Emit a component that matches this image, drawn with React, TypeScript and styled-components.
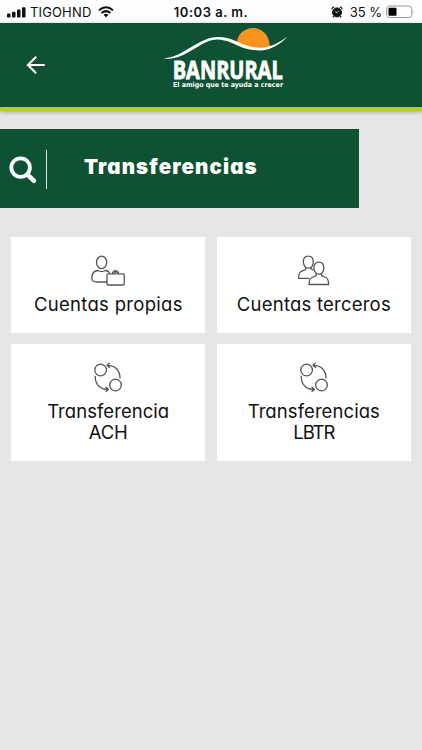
import React from "react";
import styled, { createGlobalStyle } from "styled-components";

const GlobalStyle = createGlobalStyle`
  * { box-sizing: border-box; }
  body { margin: 0; background: #e5e5e5; font-family: Inter, "Noto Sans", sans-serif; }
`;

const Screen = styled.main`
  display: flex;
  flex-direction: column;
  width: 422px;
  height: 750px;
  overflow: hidden;
  background: #e5e5e5;
`;

const StatusBar = styled.div`
  display: grid;
  grid-template-columns: 1fr auto 1fr;
  align-items: center;
  flex: none;
  height: 23px;
  padding: 1px 7px 0 7px;
  background: #fdfdfd;
  color: #111;
  font-size: 13px;
  line-height: 22px;
  white-space: nowrap;
`;

const StatusGroup = styled.div<{ $end?: boolean }>`
  display: flex;
  align-items: center;
  justify-content: ${(p) => (p.$end ? "flex-end" : "flex-start")};
`;

const Carrier = styled.span`
  margin: 0 6.5px 0 4px;
  letter-spacing: 0.15px;
`;

const Clock = styled.span`
  font-weight: 600;
  letter-spacing: 0.5px;
`;

const Percent = styled.span`
  margin: 0 4px 0 7px;
  letter-spacing: 0;
`;

const Header = styled.header`
  display: grid;
  grid-template-columns: 164px 126px 1fr;
  flex: none;
  height: 88px;
  background: #0f5233;
  border-bottom: 4px solid #b9cb34;
  box-shadow: 0 1px 4px rgba(0, 0, 0, 0.3);
`;

const BackButton = styled.button`
  display: flex;
  align-items: flex-start;
  padding: 32px 0 0 26px;
  border: 0;
  background: none;
`;

const Banner = styled.section`
  display: flex;
  flex: none;
  width: 359px;
  height: 79px;
  margin-top: 18.4px;
  padding: 20.6px 0 0 9px;
  background: #0f5233;
`;

const SearchBox = styled.div`
  width: 38px;
  height: 39px;
  padding-top: 6px;
  border-right: 1px solid #dfe9e4;
`;

const Title = styled.h1`
  margin: 3px 0 0 37px;
  color: #fff;
  font-size: 20.5px;
  font-weight: 900;
  line-height: 28px;
  letter-spacing: 1.1px;
  font-feature-settings: "cv11";
`;

const CardGrid = styled.div`
  display: grid;
  grid-template-columns: 194px 194px;
  grid-template-rows: 96px 117px;
  gap: 11px 11.6px;
  padding: 28.6px 0 0 11.2px;
`;

const Card = styled.button`
  display: flex;
  flex-direction: column;
  align-items: center;
  padding: 17px 0 0;
  border: 0;
  background: #fff;
  color: #111;
  font-family: inherit;
`;

const Line = styled.span<{ $spacing: number }>`
  font-size: 18.5px;
  line-height: 21.5px;
  letter-spacing: ${(p) => p.$spacing}px;
  margin-right: -${(p) => Math.max(p.$spacing, 0)}px;
  white-space: nowrap;
  font-feature-settings: "cv11";
`;

const CardIcon = styled.svg`
  flex: none;
  width: 36px;
  height: 34px;
  margin-bottom: 6px;
  fill: none;
  stroke: #555;
  stroke-width: 1.3;
  stroke-linecap: round;
  stroke-linejoin: round;
`;

const Signal = () => (
  <svg width="19" height="11" viewBox="0 0 19 11" fill="#111">
    <rect x="0" y="6.5" width="3.5" height="4" rx="0.9" />
    <rect x="5" y="4.7" width="3.5" height="5.8" rx="0.9" />
    <rect x="10" y="2.5" width="3.5" height="8" rx="0.9" />
    <rect x="15" y="0.3" width="3.5" height="10.2" rx="0.9" />
  </svg>
);

const Wifi = () => (
  <svg width="16" height="12" viewBox="0 0 16 12" fill="none" stroke="#111" strokeWidth="2">
    <path d="M1 4.2Q8-1.8 15 4.2M3.5 7Q8 3.2 12.5 7" />
    <path d="M5.6 8.7Q8 6.9 10.4 8.7L8 11.4Z" fill="#111" stroke="none" />
  </svg>
);

const Alarm = () => (
  <svg width="12" height="12" viewBox="0 0 12 12" fill="none" stroke="#111">
    <circle cx="6" cy="6.4" r="4.5" fill="#111" />
    <path d="M.8 3.2Q1 1.2 3.2.9M11.2 3.2Q11 1.2 8.8.9M2.8 10.2l-1 1M9.2 10.2l1 1" strokeWidth="1.3" />
    <path d="M6 6.7 4.2 5.6M6 6.7 7.9 4.8" stroke="#fff" strokeWidth="0.8" />
  </svg>
);

const Battery = () => (
  <svg width="29" height="14" viewBox="0 0 29 14">
    <rect x="0.6" y="1" width="25.2" height="11.5" rx="3" fill="none" stroke="#999" />
    <rect x="2.5" y="2.8" width="8" height="8" rx="1" fill="#000" />
    <path d="M27.4 5v3.6q1.2-1.8 0-3.6" fill="#999" />
  </svg>
);

const Logo = () => (
  <svg width="126" height="84" viewBox="164 23 126 84" overflow="visible">
    <path d="M236.5 43.3C239 22.5 269 22.5 269.8 46.5Q251 51 236.5 43.3Z" fill="#f7931e" />
    <path
      d="M164.5 58.2C184 57 198 36.8 219 37C236 37.3 240 47 260 47.7C270 47.5 279 43 287.5 36.5C279 45.5 270 50.3 260 50.4C239 50.4 234 40.2 218 39.4C200 39.2 188 59.5 164.5 58.8Z"
      fill="#fff"
    />
    <g fill="#fff" fontFamily='"Open Sans", "Noto Sans", sans-serif' fontWeight="700">
      <text x="172.7" y="79" fontSize="25" textLength="110" lengthAdjust="spacingAndGlyphs" stroke="#fff" strokeWidth="0.8">
        BANRURAL
      </text>
      <text x="173" y="86.6" fontSize="6.9" fontFamily='"DejaVu Sans", sans-serif' textLength="110" lengthAdjust="spacingAndGlyphs">
        El amigo que te ayuda a crecer
      </text>
    </g>
  </svg>
);

const OwnAccount = () => (
  <CardIcon viewBox="0 0 36 34">
    <ellipse cx="11.6" cy="8.4" rx="5.1" ry="6.2" />
    <path d="M16.8 28H7Q2 27.8 2 25V22.5Q2.6 16.8 8.2 16.5Q11.6 18.6 15.2 16.5Q18.4 16.7 19.8 19" />
    <rect x="17" y="19.8" width="17.2" height="11.2" rx="1.2" />
    <path d="M22.7 19.5v-1.3h5.7v1.3M24 18v-1h3v1" />
  </CardIcon>
);

const ThirdParty = () => (
  <CardIcon viewBox="0 0 36 34">
    <path d="M7.3 8C7.3 4 9.2 2.2 12.3 2.2S17.3 4 17.3 8Q17 14.2 12.3 14.2Q8 14.2 7.3 8Z" />
    <path d="M9.6 13.3v2.3L5.2 17.4Q2.7 18.4 2.5 24.3H13M15 13.3v1.7l2 .8" />
    <path d="M17.9 14C17.9 10 19.8 8.2 22.8 8.2S27.8 10 27.8 14Q27.5 20.2 22.8 20.2Q18.6 20.2 17.9 14Z" />
    <path d="M20.2 19.5v2.2L16 23.5Q13.2 24.5 13 30.5H32.7Q32.5 24.5 29.8 23.5L25.5 21.7v-2.2" />
  </CardIcon>
);

const Transfer = () => (
  <CardIcon viewBox="0 0 36 34">
    <circle cx="10.6" cy="9" r="5.8" />
    <circle cx="25.5" cy="24" r="5.8" />
    <path d="M17.2 4.3C25 4 30 9.6 30 17M19.3 2.2 17 4.3l2.5 2.1M5.3 15.5C5 23.4 10.5 28.7 18 28.5M16 26.2l2.4 2.3-2.4 2" />
  </CardIcon>
);

interface TransferOption {
  icon: React.FC;
  lines: { text: string; spacing: number }[];
}

const options: TransferOption[] = [
  { icon: OwnAccount, lines: [{ text: "Cuentas propias", spacing: 0.3 }] },
  { icon: ThirdParty, lines: [{ text: "Cuentas terceros", spacing: 0.22 }] },
  { icon: Transfer, lines: [{ text: "Transferencia", spacing: 0.05 }, { text: "ACH", spacing: -0.1 }] },
  { icon: Transfer, lines: [{ text: "Transferencias", spacing: 0.08 }, { text: "LBTR", spacing: -1.1 }] },
];

export default function App() {
  return (
    <>
      <GlobalStyle />
      <Screen>
        <StatusBar>
          <StatusGroup>
            <Signal />
            <Carrier>TIGOHND</Carrier>
            <Wifi />
          </StatusGroup>
          <Clock>10:03 a. m.</Clock>
          <StatusGroup $end>
            <Alarm />
            <Percent>35 %</Percent>
            <Battery />
          </StatusGroup>
        </StatusBar>
        <Header>
          <BackButton aria-label="Atrás">
            <svg width="20" height="20" viewBox="0 0 20 20" fill="none" stroke="#fff" strokeWidth="2.1">
              <path d="M18.8 10H2M10.2 1.7 1.9 10l8.3 8.3" />
            </svg>
          </BackButton>
          <Logo />
        </Header>
        <Banner>
          <SearchBox>
            <svg width="28" height="28" viewBox="0 0 28 28" fill="none" stroke="#fff">
              <circle cx="11.6" cy="11.6" r="9.3" strokeWidth="3.8" />
              <path d="m18.6 18.6 6.3 6.3" strokeWidth="4.4" strokeLinecap="round" />
            </svg>
          </SearchBox>
          <Title>Transferencias</Title>
        </Banner>
        <CardGrid>
          {options.map(({ icon: Icon, lines }) => (
            <Card key={lines.map((l) => l.text).join(" ")}>
              <Icon />
              {lines.map((l) => (
                <Line key={l.text} $spacing={l.spacing}>{l.text}</Line>
              ))}
            </Card>
          ))}
        </CardGrid>
      </Screen>
    </>
  );
}
